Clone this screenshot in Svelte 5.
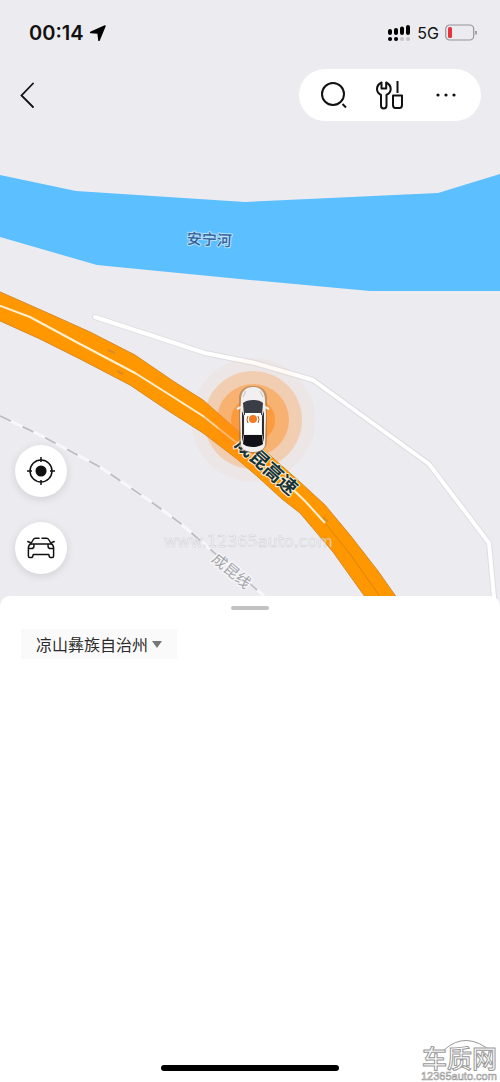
<script lang="ts">
	let region = $state('凉山彝族自治州');
	const regions = ['凉山彝族自治州'];

	const rings = [
		{ r: 62, opacity: 0.04 },
		{ r: 49, opacity: 0.26 },
		{ r: 36, opacity: 0.42 },
		{ r: 22, opacity: 0.6 }
	];
</script>

<div class="screen">
	<section class="map">
		<svg class="map-canvas" viewBox="0 0 500 608" preserveAspectRatio="xMidYMid slice" aria-label="地图">
			<!-- river -->
			<path
				d="M0 175 76 191 245 202 438 193 500 174V291H370L250 280 97 265 0 237Z"
				fill="#5cbfff"
			/>
			<text class="label river" transform="translate(209 245) rotate(3)">安宁河</text>

			<!-- side road -->
			<path class="road-edge" d="M95 317 205 353 255 363 313 380 429 464 489 543 495 608" />
			<path class="road" d="M95 317 205 353 255 363 313 380 429 464 489 543 495 608" />

			<!-- railway -->
			<path class="rail-edge" d="M0 416 40 435 100 467 150 501 180 523 264 596" />
			<path class="rail" d="M0 416 40 435 100 467 150 501 180 523 264 596" />
			<text class="label railway" transform="translate(228 575) rotate(40)">成昆线</text>

			<!-- expressway -->
			<path
				class="highway"
				d="M-2 291 50 314 90 332 135 355 173 381 203 400 237 430 265 451 300 482 325 505 350 535 378 571 404 608H373L333 552 300 513 282 499 258 477 237 459 203 433 167 410 130 385 80 359 40 339-2 320Z"
			/>
			<path class="divider" d="M-2 305 30 317 80 344 135 373 170 395 203 416 237 443 285 482 305 501 325 523" />
			<path class="divider thin" d="M325 523 350 554 388 608" />
			<path class="arrow" d="m108 350 7 3M117 371l6 3M323 517l5 5" />

			<g fill="#ff8c1a">
				{#each rings as ring}
					<circle cx="253" cy="420" r={ring.r} fill-opacity={ring.opacity} />
				{/each}
			</g>
			<text class="label express" transform="translate(262 471) rotate(42)">成昆高速</text>

			<!-- vehicle -->
			<g>
				<rect x="239" y="386" width="28" height="67" rx="12" fill="#8d6b4b" opacity="0.5" />
				<path
					d="M241 400c0-9 5-13 12-13s12 4 12 13l1 15-1 30c-1 5-6 7-12 7s-11-2-12-7l-1-30Z"
					fill="#f1eff0"
				/>
				<path d="M237 409l4-2M269 409l-4-2" stroke="#f1eff0" stroke-width="2" />
				<path d="M243 403c4-4 16-4 20 0l-1 12h-18Z" fill="#3a3d45" />
				<path d="M242 411l2 5v18l-2 8ZM264 411l-2 5v18l2 8Z" fill="#303138" />
				<path d="M245 413h16v21h-16Z" fill="#fff" />
				<path d="M244 435h18l1 9c-5 4-15 4-20 0Z" fill="#111217" />
				<path d="M243 397l3-6M263 397l-3-6" stroke="#bfc0c4" />
				<circle cx="253" cy="419" r="4" fill="#f47b20" />
				<path d="M248 416q-2 4 0 7M258 416q2 4 0 7" fill="none" stroke="#a75b2b" />
			</g>
			<text class="watermark" x="164" y="547">www.12365auto.com</text>
		</svg>

		<header class="status">
			<span class="time">00:14</span>
			<svg width="16" height="16" viewBox="0 0 16 16" aria-hidden="true">
				<path d="M15 1 9 15.500 8 8 .5 7.500Z" fill="#000" stroke="#000" stroke-width="1.500" stroke-linejoin="round" />
			</svg>
			<svg class="signal" width="24" height="18" viewBox="0 0 24 18" aria-hidden="true">
				<path d="M3 7v2M9 6v3M15 4.500V9M21 3v6" stroke="#000" stroke-width="4" stroke-linecap="round" />
				<path d="M3 15h.1M9 15h.1" stroke="#000" stroke-width="4" stroke-linecap="round" />
				<path d="M15 15h.1M21 15h.1" stroke="#c5c4ca" stroke-width="4" stroke-linecap="round" />
			</svg>
			<span class="network">5G</span>
			<svg width="32" height="17" viewBox="0 0 32 17" aria-hidden="true">
				<rect x=".7" y="1" width="28" height="15" rx="4" fill="none" stroke="#95949b" stroke-width="1.200" />
				<rect x="3" y="3" width="4" height="11" rx="1.500" fill="#e5343b" />
				<path d="M31 7v3.500" stroke="#8b8a90" stroke-width="1.500" />
			</svg>
		</header>

		<nav class="topbar">
			<button class="back" aria-label="返回">
				<svg width="16" height="26" viewBox="0 0 16 26">
					<path d="M13 1.500 1.500 13.500 13 25" fill="none" stroke="#111" stroke-width="1.800" stroke-linecap="round" />
				</svg>
			</button>
			<div class="actions">
				<button aria-label="搜索">
					<svg width="30" height="30" viewBox="0 0 30 30">
						<circle cx="14" cy="14" r="11" />
						<path d="m23.500 24 3.500 3.500" />
					</svg>
				</button>
				<button aria-label="工具">
					<svg width="30" height="30" viewBox="0 0 30 30">
						<path
							d="M6.500 2.500C3.500 4 2 6.500 2 9c0 3 1.800 4.800 4 6v10.500c0 2 1 3 2.700 3s2.800-1 2.800-3V15c2.500-1.200 4.200-3 4.200-6 0-2.500-1.500-5-4.500-6.500V8.500H6.500Z"
							stroke-linejoin="round"
						/>
						<path d="M22.500 1v12M18 15.500h9V25c0 2-1 3-2.500 3h-4c-1.500 0-2.500-1-2.500-3Z" stroke-linejoin="round" />
					</svg>
				</button>
				<button aria-label="更多">
					<svg width="30" height="30" viewBox="0 0 30 30">
						<g fill="#111" stroke="none">
							<circle cx="7" cy="15" r="1.600" />
							<circle cx="15" cy="15" r="1.600" />
							<circle cx="23" cy="15" r="1.600" />
						</g>
					</svg>
				</button>
			</div>
		</nav>

		<div class="tools">
			<button aria-label="定位">
				<svg width="30" height="30" viewBox="0 0 30 30">
					<circle cx="15" cy="15" r="11" />
					<path d="M15 1v5M15 24v5M1 15h5M24 15h5" />
					<circle cx="15" cy="15" r="4.800" fill="#111" />
				</svg>
			</button>
			<button aria-label="车辆">
				<svg width="30" height="30" viewBox="0 0 30 30" stroke-linejoin="round" stroke-linecap="round">
					<path d="M13 5.200H9.500q-1.500 0-2.200 1.300L5 10.500q-2.600 1.500-2.600 4.500v8q0 1.500 1.200 1.500h1.800q1 0 1.300-1l.6-2h15.400l.6 2q.3 1 1.300 1h1.800q1.200 0 1.200-1.500v-8q0-3-2.600-4.500l-2.300-4q-.7-1.300-2.200-1.300H16" />
					<path d="M5 11h20M1.800 8.500l2.400 1M28.200 8.500l-2.400 1M3 15.500h3.500q1.800-1 1.500-3.500M27 15.500h-3.500q-1.800-1-1.500-3.500" />
				</svg>
			</button>
		</div>
	</section>

	<main class="sheet">
		<div class="grabber"></div>
		<div class="region">
			<select bind:value={region} aria-label="地区">
				{#each regions as name}
					<option value={name}>{name}</option>
				{/each}
			</select>
			<svg width="10" height="7" viewBox="0 0 10 7" aria-hidden="true">
				<path d="M0 0h10L5 7Z" fill="#777" />
			</svg>
		</div>
	</main>

	<div class="home-indicator"></div>
	<svg class="brand" width="80" height="44" viewBox="0 0 80 44" aria-hidden="true">
		<path d="M24 12Q46-8 72 14" />
		<text class="brand-name" x="2" y="30">车质网</text>
		<text class="brand-url" x="1" y="42">12365auto.com</text>
	</svg>
</div>

<style>
	:global(body) {
		margin: 0;
		background: #fff;
	}

	.screen {
		position: relative;
		display: flex;
		flex-direction: column;
		min-height: 100vh;
		font-family: Inter, 'Noto Sans CJK SC', sans-serif;
		color: #111;
	}

	button {
		display: flex;
		align-items: center;
		justify-content: center;
		padding: 0;
		border: 0;
		background: none;
		cursor: pointer;
	}

	.map {
		position: relative;
		overflow: hidden;
		padding-bottom: 34px;
		background: #ecebf0;
	}

	.map-canvas {
		position: absolute;
		inset: 0;
		width: 100%;
		height: 100%;
	}

	.label {
		font-family: 'Noto Sans CJK SC', sans-serif;
		text-anchor: middle;
		paint-order: stroke;
		stroke-linejoin: round;
	}

	.river {
		font-size: 15px;
		font-weight: 500;
		fill: #32649c;
		stroke: #b9e0fb;
		stroke-width: 2;
	}

	.railway {
		font-size: 15px;
		fill: #a3a4a9;
		stroke: #f6f6f8;
		stroke-width: 3;
	}

	.express {
		font-size: 19px;
		font-weight: 700;
		fill: #173338;
		stroke: #fff3dc;
		stroke-width: 2;
	}

	.road-edge,
	.road,
	.rail-edge,
	.rail,
	.divider,
	.arrow {
		fill: none;
		stroke-linejoin: round;
	}

	.road-edge {
		stroke: #dedde1;
		stroke-width: 6;
		stroke-linecap: round;
	}

	.road {
		stroke: #fff;
		stroke-width: 4;
		stroke-linecap: round;
	}

	.rail-edge {
		stroke: #f8f8fa;
		stroke-width: 3;
	}

	.rail {
		stroke: #bfc0c4;
		stroke-width: 2;
		stroke-dasharray: 12 13;
	}

	.highway {
		fill: #ff9800;
		stroke: #d58a2b;
		stroke-width: 1;
	}

	.divider {
		stroke: #fff0d6;
		stroke-width: 2;
	}

	.divider.thin {
		stroke: #da8410;
		stroke-width: 1;
	}

	.arrow {
		stroke: #d98a2a;
		stroke-width: 2;
	}

	.watermark {
		font-family: 'DejaVu Sans', sans-serif;
		font-size: 16px;
		fill: #fff;
		fill-opacity: 0.5;
		stroke: #aaa;
		stroke-opacity: 0.5;
		stroke-width: 0.5;
	}

	.status {
		position: relative;
		display: flex;
		align-items: center;
		gap: 6px;
		height: 21px;
		padding: 22px 23px 26px 29px;
	}

	.time {
		font-size: 20px;
		font-weight: 600;
	}

	.signal {
		margin-left: auto;
	}

	.network {
		font-size: 16px;
	}

	.topbar {
		position: relative;
		display: flex;
		align-items: center;
		justify-content: space-between;
		padding: 0 19px 0 14px;
	}

	.back {
		width: 28px;
		height: 44px;
	}

	.actions {
		display: flex;
		align-items: center;
		justify-content: space-between;
		box-sizing: border-box;
		width: 182px;
		height: 52px;
		padding: 0 20px;
		border-radius: 26px;
		background: #fff;
	}

	.actions svg {
		fill: none;
		stroke: #111;
		stroke-width: 2;
	}

	.tools {
		position: relative;
		display: flex;
		flex-direction: column;
		align-items: flex-start;
		gap: 25px;
		padding: 324px 15px 0;
	}

	.tools button {
		width: 52px;
		height: 52px;
		border-radius: 50%;
		background: #fff;
		box-shadow: 0 2px 8px rgba(0, 0, 0, 0.12);
	}

	.tools svg {
		fill: none;
		stroke: #111;
		stroke-width: 1.5;
	}

	.sheet {
		position: relative;
		flex: 1;
		margin-top: -12px;
		border-radius: 10px 10px 0 0;
		background: #fff;
	}

	.grabber {
		width: 38px;
		height: 4px;
		margin: 10px auto 19px;
		border-radius: 2px;
		background: #c2c2c2;
	}

	.region {
		display: inline-flex;
		align-items: center;
		position: relative;
		margin-left: 21px;
		background: #fafafa;
	}

	.region select {
		height: 30px;
		padding: 0 28px 0 15px;
		border: 0;
		background: none;
		appearance: none;
		color: #2b2b2b;
		font-family: 'Noto Sans CJK SC', sans-serif;
		font-size: 16px;
	}

	.region svg {
		position: absolute;
		right: 15px;
		pointer-events: none;
	}

	.home-indicator {
		width: 178px;
		height: 6px;
		margin: 0 auto 11px;
		border-radius: 3px;
		background: #000;
	}

	.brand {
		position: absolute;
		right: 0;
		bottom: 0;
		fill: #fff;
		stroke: #999;
		stroke-width: 1;
	}

	.brand path {
		fill: none;
	}

	.brand-name {
		font-family: 'Noto Sans CJK SC', sans-serif;
		font-size: 25px;
		font-weight: 500;
	}

	.brand-url {
		font-family: 'Liberation Sans', sans-serif;
		font-size: 11px;
		stroke-width: 0.6;
	}
</style>
